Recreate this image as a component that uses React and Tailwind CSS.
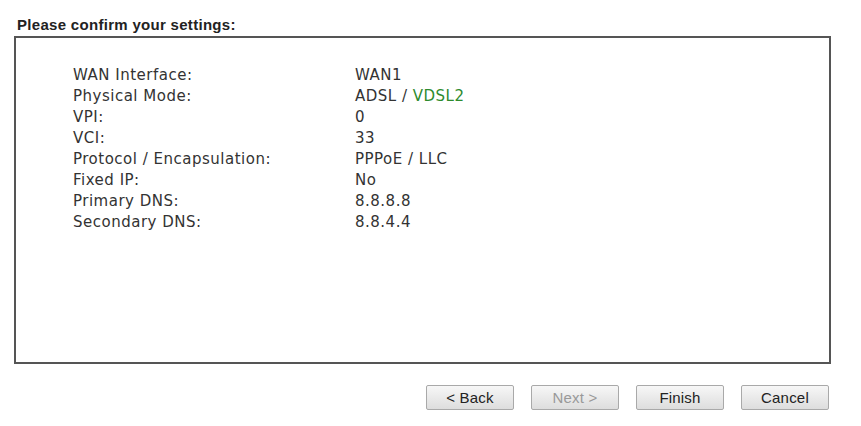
export default function App() {
  const rows = [
    ["WAN Interface:", "WAN1"],
    ["Physical Mode:", null],
    ["VPI:", "0"],
    ["VCI:", "33"],
    ["Protocol / Encapsulation:", "PPPoE / LLC"],
    ["Fixed IP:", "No"],
    ["Primary DNS:", "8.8.8.8"],
    ["Secondary DNS:", "8.8.4.4"],
  ];
  const btn =
    "w-[88px] h-[25px] border border-[#a9a9a9] rounded-[2px] bg-gradient-to-b from-[#f7f7f7] to-[#dddddd] text-[15px] tracking-[0.2px] leading-none text-[#222] [font-family:'Liberation_Sans',Arial,sans-serif]";
  return (
    <div className="w-[861px] h-[426px] bg-white relative overflow-hidden">
      <div className="pt-[16px] pl-[17px] text-[15px] tracking-[0.3px] leading-[18px] font-bold text-[#222] [font-family:'Liberation_Sans',Arial,sans-serif]">
        Please confirm your settings:
      </div>
      <div className="ml-[14px] mt-[2px] w-[817px] h-[328px] border-2 border-[#555] pt-[27px] pl-[57px] [font-family:'DejaVu_Sans',Verdana,sans-serif] text-[15px] tracking-[0.5px] text-[#333]">
        {rows.map(([k, v]) => (
          <div key={k} className="flex h-[21px] items-center">
            <div className="w-[282px]">{k}</div>
            <div>
              {v === null ? (
                <>
                  ADSL / <span className="text-[#2e8b2e]">VDSL2</span>
                </>
              ) : (
                v
              )}
            </div>
          </div>
        ))}
      </div>
      <div className="flex justify-end gap-[17px] pr-[32px] mt-[21px]">
        <button className={btn}>&lt; Back</button>
        <button className={btn + " !text-[#999]"}>Next &gt;</button>
        <button className={btn}>Finish</button>
        <button className={btn}>Cancel</button>
      </div>
    </div>
  );
}
